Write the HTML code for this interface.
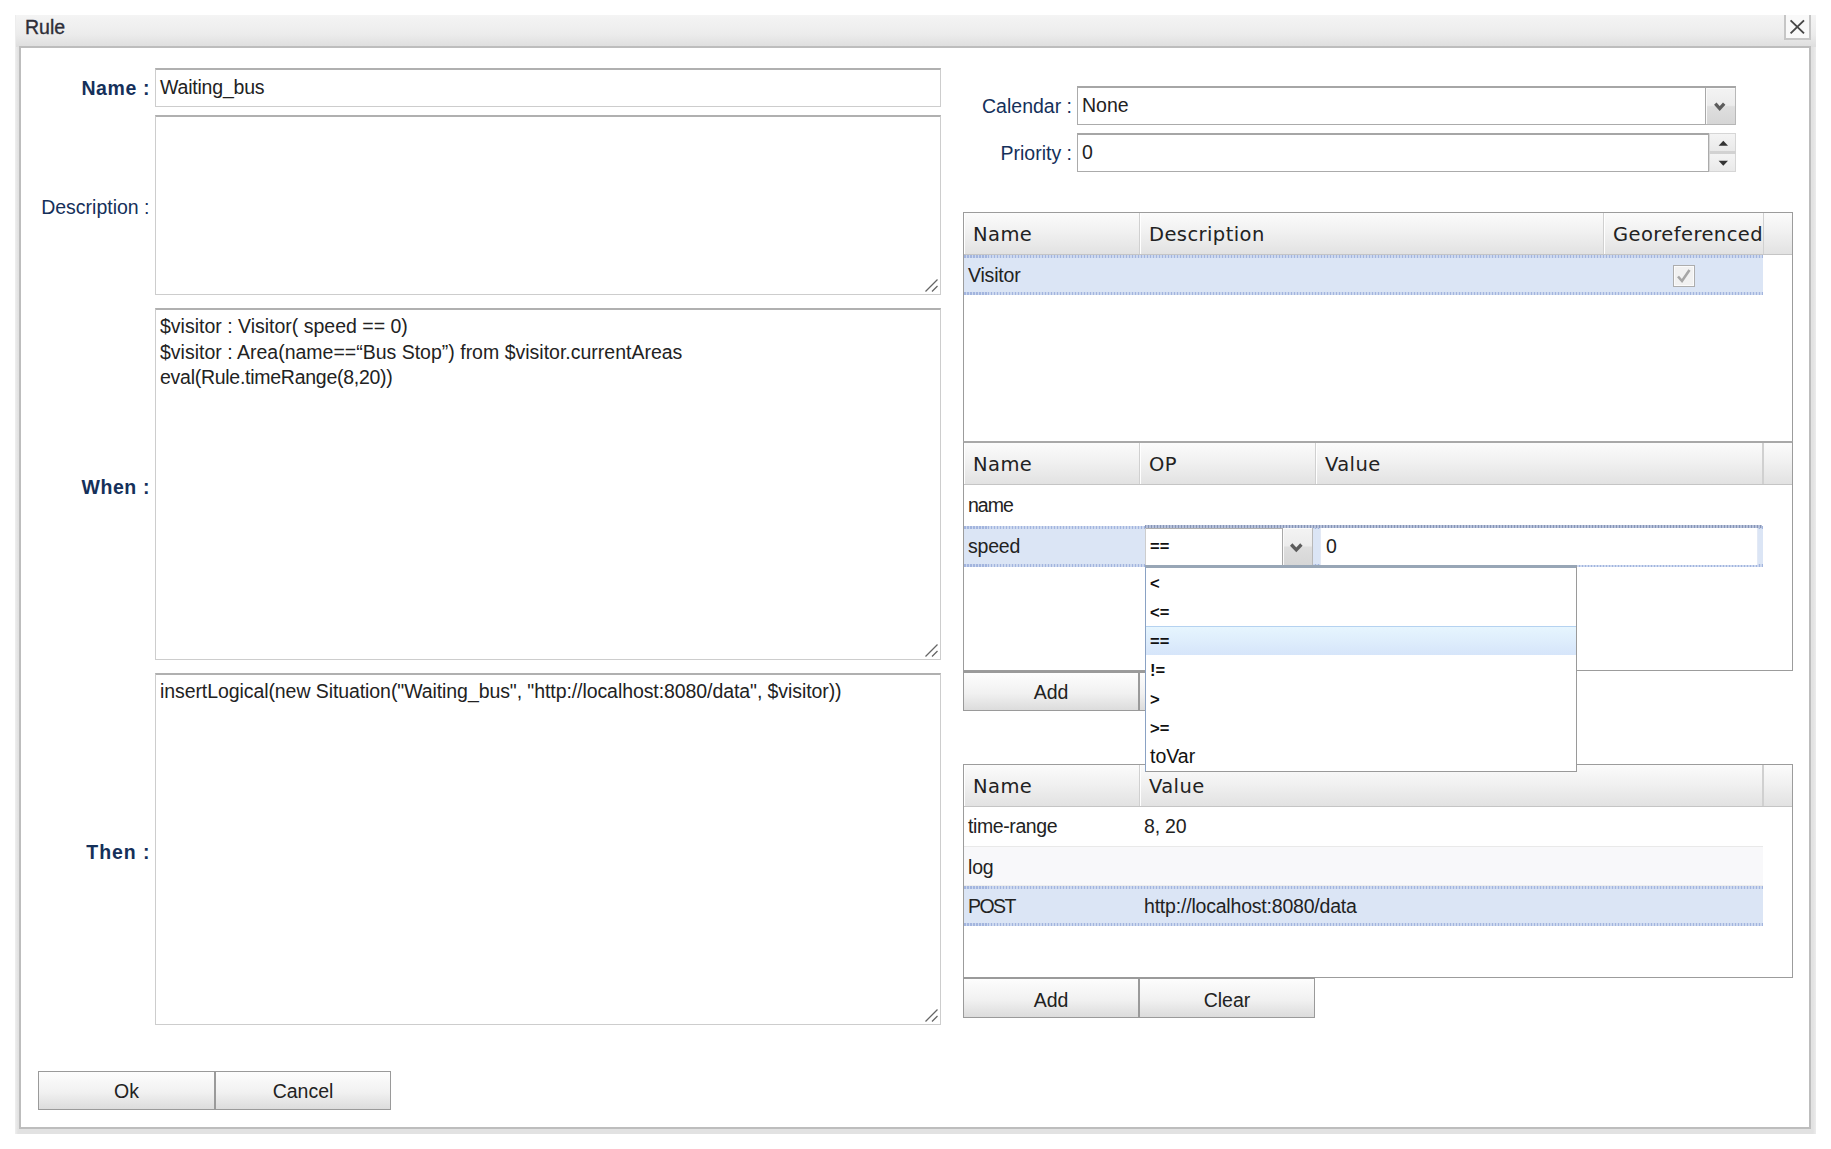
<!DOCTYPE html>
<html><head><meta charset="utf-8"><title>Rule</title>
<style>
html,body{margin:0;padding:0;background:#fff;}
body{width:1831px;height:1149px;position:relative;overflow:hidden;font-family:"Liberation Sans",Arial,sans-serif;font-size:19.5px;color:#222;}
.abs{position:absolute;box-sizing:border-box;}
.win{left:15px;top:15px;width:1801px;height:1119px;background:linear-gradient(90deg,#efefef,#e2e2e2 3px,#e2e2e2 1798px,#ececec);}
.title{left:16px;top:15px;width:1800px;height:32px;background:linear-gradient(#f4f4f4,#ececec 60%,#dedede);}
.title span{position:absolute;left:9px;top:1px;font-size:19.5px;line-height:22px;color:#2e2e38;-webkit-text-stroke:0.35px #2e2e38;}
.body{left:19px;top:46px;width:1792px;height:1083px;background:#fff;border:2px solid #bdbdbd;}
.close{left:1784px;top:15px;width:27px;height:25px;border:2px solid #c6c6c6;border-top:none;background:#f9f9f9;}
.lbl{text-align:right;color:#15305a;line-height:24px;height:24px;white-space:nowrap;}
.b{font-weight:bold;letter-spacing:0.6px;}
.fld{background:#fff;border:1px solid #cdcdcd;border-top:2px solid #b0b0b0;}
.txt{white-space:pre;line-height:25.5px;color:#222;}
.btn{border:1px solid #9a9a9a;background:linear-gradient(#fdfdfd,#f1f1f1 55%,#dcdcdc);text-align:center;line-height:37px;color:#222;}
.grid{border:1px solid #9c9c9c;background:#fff;}
.hd{background:linear-gradient(#fbfbfb,#f1f1f1 45%,#e2e2e2);border-bottom:1px solid #c5c5c5;}
.hc{font-family:"DejaVu Sans",Verdana,sans-serif;letter-spacing:0.42px;font-size:19.5px;line-height:44px;color:#222;border-right:1px solid #d0d0d0;border-left:1px solid #fff;padding-left:8px;height:41px;white-space:nowrap;overflow:hidden;}
.row{height:40px;line-height:41px;white-space:nowrap;letter-spacing:-0.2px;}
.sel{background:repeating-linear-gradient(90deg,#a3b5de 0 1.5px,#ccd8ef 1.5px 3px) top/100% 3px no-repeat,repeating-linear-gradient(90deg,#a3b5de 0 1.5px,#ccd8ef 1.5px 3px) bottom/100% 3px no-repeat,#dbe5f5;}
.cell{position:absolute;top:0;padding-left:4px;}

.trig{border-left:1px solid #a8a8a8;border-bottom:1px solid #b5b5b5;border-right:1px solid #b8b8b8;background:linear-gradient(#f3f3f3,#ececec 48%,#dedede 52%,#d6d6d6);box-shadow:inset 1px 1px 0 #fafafa;}
.spin{border:1px solid #d6d6d6;background:linear-gradient(#f4f4f4,#e9e9e9);}
.hsp{background:linear-gradient(#fbfbfb,#f1f1f1 45%,#e2e2e2);border-left:1px solid #d0d0d0;}
.chk{border:1px solid #adadad;background:#f1f1f1;box-shadow:inset 0 0 0 1px #fbfbfb;}
.alt{background:#f8f8fa;border-top:1px solid #e9e9e9;border-bottom:1px solid #ededed;}
.sm{font-size:16.5px;line-height:20px;color:#111;font-weight:bold;}
.dd{background:#fff;border:1px solid #9a9a9a;border-top:3px solid #98a6b6;border-left:1px solid #8aa2c4;}
.it{height:29px;line-height:31px;font-size:16.5px;padding-left:4px;color:#111;box-sizing:border-box;font-weight:bold;}
.it.on{background:linear-gradient(#e6f5fe,#d6e5fa);border-top:1px solid #b5d2f0;line-height:28px;}
</style></head><body>
<div class="abs win"></div>
<div class="abs title"><span>Rule</span></div>
<div class="abs body"></div>
<div class="abs close"></div>
<svg class="abs" style="left:1784px;top:15px" width="27" height="26" viewBox="0 0 27 26"><path d="M6.6 5.4 L20 18.4 M20 5.4 L6.6 18.4" stroke="#474747" stroke-width="1.9" fill="none"/></svg>

<!-- left column -->
<div class="abs lbl b" style="left:32px;top:76px;width:118px;">Name :</div>
<div class="abs fld" style="left:155px;top:68px;width:786px;height:39px;"></div>
<div class="abs txt" style="left:160px;top:75px;letter-spacing:-0.2px">Waiting_bus</div>

<div class="abs lbl" style="left:31.5px;top:195px;width:118px;">Description :</div>
<div class="abs fld" style="left:155px;top:115px;width:786px;height:180px;"></div>

<div class="abs lbl b" style="left:32px;top:475px;width:118px;">When :</div>
<div class="abs fld" style="left:155px;top:308px;width:786px;height:352px;"></div>
<div class="abs txt" style="left:160px;top:314px;">$visitor : Visitor( speed == 0)
$visitor : Area(name==“Bus Stop”) from $visitor.currentAreas
<span style="letter-spacing:-0.27px">eval(Rule.timeRange(8,20))</span></div>

<div class="abs lbl b" style="left:32.5px;top:840px;width:118px;letter-spacing:0.95px">Then :</div>
<div class="abs fld" style="left:155px;top:673px;width:786px;height:352px;"></div>
<div class="abs txt" style="left:160px;top:679px;letter-spacing:-0.08px">insertLogical(new Situation("Waiting_bus", "http://localhost:8080/data", $visitor))</div>

<div class="abs btn" style="left:38px;top:1071px;width:177px;height:39px;line-height:39px">Ok</div>
<div class="abs btn" style="left:215px;top:1071px;width:176px;height:39px;line-height:39px">Cancel</div>

<svg class="abs" style="left:923px;top:277px" width="16" height="16" viewBox="0 0 16 16"><path d="M2.5 14.5 L14.5 2.5 M9 14.5 L14.5 9" stroke="#666" stroke-width="1.3" fill="none"/></svg>
<svg class="abs" style="left:923px;top:642px" width="16" height="16" viewBox="0 0 16 16"><path d="M2.5 14.5 L14.5 2.5 M9 14.5 L14.5 9" stroke="#666" stroke-width="1.3" fill="none"/></svg>
<svg class="abs" style="left:923px;top:1007px" width="16" height="16" viewBox="0 0 16 16"><path d="M2.5 14.5 L14.5 2.5 M9 14.5 L14.5 9" stroke="#666" stroke-width="1.3" fill="none"/></svg>
<!-- right column top -->
<div class="abs lbl" style="left:952px;top:94px;width:120px;">Calendar :</div>
<div class="abs fld" style="left:1077px;top:86px;width:659px;height:39px;border-color:#ababab;border-top-color:#a6a6a6"></div>
<div class="abs txt" style="left:1082px;top:93px;">None</div>
<div class="abs lbl" style="left:952px;top:141px;width:120px;">Priority :</div>
<div class="abs fld" style="left:1077px;top:133px;width:632px;height:39px;border-color:#ababab;border-top-color:#a6a6a6"></div>
<div class="abs txt" style="left:1082px;top:140px;">0</div>


<!-- combo trigger + spinner -->
<div class="abs trig" style="left:1705px;top:88px;width:31px;height:37px;"><svg width="29" height="36" viewBox="0 0 29 36"><path d="M9.3 15.7 L13.7 20.6 L18.2 15.7" stroke="#5c5c5c" stroke-width="3.3" fill="none"/></svg></div>
<div class="abs spin" style="left:1709px;top:133px;width:27px;height:19px;"><svg width="25" height="17" viewBox="0 0 25 17"><path d="M8.6 10.7 L13.3 5.8 L18 10.7 Z" fill="#333"/></svg></div>
<div class="abs spin" style="left:1709px;top:153px;width:27px;height:19px;"><svg width="25" height="17" viewBox="0 0 25 17"><path d="M8.6 5.8 L13.3 10.7 L18 5.8 Z" fill="#333"/></svg></div>

<div class="abs" style="left:1709px;top:151px;width:27px;height:3px;background:#d2d2d2"></div>
<!-- grid 1 -->
<div class="abs grid" style="left:963px;top:212px;width:830px;height:230px;"></div>
<div class="abs hd" style="left:964px;top:213px;width:828px;height:42px;"></div>
<div class="abs hc" style="left:964px;top:213px;width:176px;">Name</div>
<div class="abs hc" style="left:1140px;top:213px;width:464px;">Description</div>
<div class="abs hc" style="left:1604px;top:213px;width:159px;border-right:none;">Georeferenced</div>
<div class="abs hsp" style="left:1763px;top:213px;width:29px;height:41px;"></div>
<div class="abs row sel" style="left:964px;top:255px;width:799px;"><span class="cell" style="left:0">Visitor</span></div>
<div class="abs chk" style="left:1673px;top:265px;width:22px;height:22px;"><svg width="20" height="20" viewBox="0 0 20 20"><path d="M4 10.5 L8 15 L15.5 4" stroke="#a6a6a6" stroke-width="2.6" fill="none"/></svg></div>

<!-- grid 2 -->
<div class="abs grid" style="left:963px;top:441px;width:830px;height:230px;border-top:2px solid #a8a8a8;"></div>
<div class="abs hd" style="left:964px;top:443px;width:828px;height:42px;"></div>
<div class="abs hc" style="left:964px;top:443px;width:176px;">Name</div>
<div class="abs hc" style="left:1140px;top:443px;width:176px;">OP</div>
<div class="abs hc" style="left:1316px;top:443px;width:447px;">Value</div>
<div class="abs hsp" style="left:1763px;top:443px;width:29px;height:41px;"></div>
<div class="abs row" style="left:964px;top:485px;width:799px;line-height:40px"><span class="cell" style="left:0;letter-spacing:-1px">name</span></div>
<div class="abs row sel" style="left:964px;top:526px;width:799px;height:41px;line-height:40px"><span class="cell" style="left:0">speed</span></div>
<!-- editors -->
<div class="abs fld" style="left:1145px;top:527px;width:138px;height:39px;"></div>
<div class="abs sm" style="left:1150px;top:536px;">==</div>
<div class="abs trig" style="left:1282px;top:528px;width:31px;height:38px;"><svg width="29" height="36" viewBox="0 0 29 36"><path d="M8.2 16.5 L13.3 21.8 L18.4 16.5" stroke="#5c5c5c" stroke-width="3.3" fill="none"/></svg></div>
<div class="abs" style="left:1320px;top:528px;width:438px;height:37px;background:#fff;border:1px solid #e3e9f5;border-top:none;border-bottom:none"></div>
<div class="abs txt" style="left:1326px;top:534px;">0</div>

<div class="abs" style="left:1145px;top:525px;width:617px;height:3px;background:repeating-linear-gradient(90deg,#8795b6 0 1.5px,#b6c1da 1.5px 3px)"></div>
<!-- grid 2 buttons -->
<div class="abs btn" style="left:963px;top:671px;width:176px;height:40px;line-height:38px;border-top-width:2px">Add</div>
<div class="abs btn" style="left:1139px;top:671px;width:176px;height:40px;line-height:38px;border-top-width:2px">Clear</div>

<!-- grid 3 -->
<div class="abs grid" style="left:963px;top:764px;width:830px;height:214px;"></div>
<div class="abs hd" style="left:964px;top:765px;width:828px;height:42px;"></div>
<div class="abs hc" style="left:964px;top:765px;width:176px;">Name</div>
<div class="abs hc" style="left:1140px;top:765px;width:623px;">Value</div>
<div class="abs hsp" style="left:1763px;top:765px;width:29px;height:41px;"></div>
<div class="abs row" style="left:964px;top:806px;width:799px;"><span class="cell" style="left:0;letter-spacing:-0.4px">time-range</span><span class="cell" style="left:176px">8, 20</span></div>
<div class="abs row alt" style="left:964px;top:846px;width:799px;"><span class="cell" style="left:0">log</span></div>
<div class="abs row sel" style="left:964px;top:886px;width:799px;"><span class="cell" style="left:0;letter-spacing:-1.6px">POST</span><span class="cell" style="left:176px">http://localhost:8080/data</span></div>
<div class="abs btn" style="left:963px;top:977px;width:176px;height:41px;line-height:42px;border-top-width:2px">Add</div>
<div class="abs btn" style="left:1139px;top:977px;width:176px;height:41px;line-height:42px;border-top-width:2px">Clear</div>

<!-- dropdown list -->
<div class="abs dd" style="left:1145px;top:565px;width:432px;height:207px;">
<div class="it">&lt;</div><div class="it">&lt;=</div><div class="it on">==</div><div class="it">!=</div><div class="it">&gt;</div><div class="it">&gt;=</div><div class="it" style="font-size:19.5px;font-weight:normal;line-height:29px">toVar</div>
</div>
</body></html>
